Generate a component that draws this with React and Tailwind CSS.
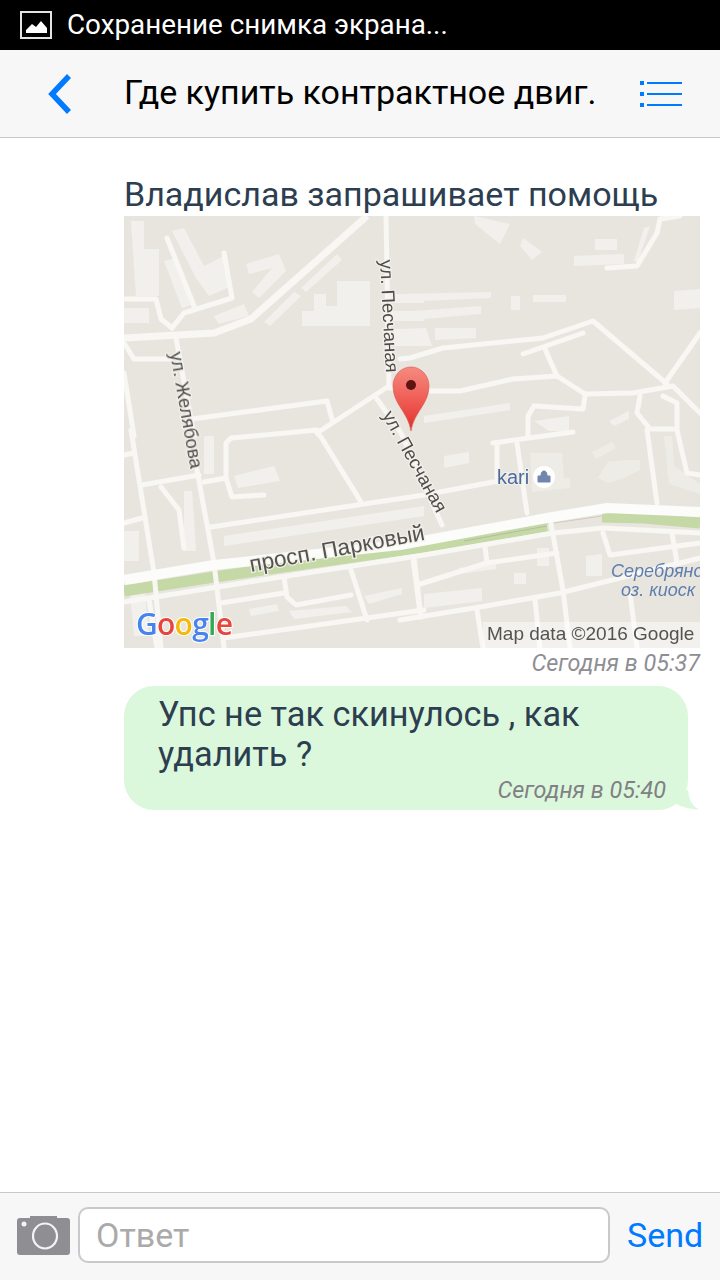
import React from 'react';

// ── map data (coords are px inside the 576x432 map) ─────────────────────────

const roads = [
  '262,0 265,170',
  '265,170 193,217 197,221 237,286',
  '253,183 277,217 318,309',
  '87,311 300,279 369,266',
  '0,386 150,362 300,339 429,317 479,312 576,317',
  '483,52 513,50 533,17 536,3 556,0',
  '276,143 286,142 319,132 419,122 469,105 543,168',
  '576,117 541,167',
  '399,138 459,117',
  '421,133 433,160',
  '266,172 306,175 336,175 389,163 433,160 461,178',
  '461,178 509,177 549,170 576,197',
  '461,180 459,193 410,190 404,200 404,220',
  '516,180 513,197 526,213 553,213 553,187 539,180',
  '369,227 449,216',
  '373,227 373,266',
  '393,227 403,297',
  '523,214 533,287',
  '553,214 563,257 576,259',
  '426,302 439,374 446,432',
  '479,317 486,339 576,327',
  '548,317 553,347',
  '276,404 356,391 436,377 576,342',
  '289,342 296,397',
  '361,331 363,347 293,369',
  '363,347 433,337',
  '411,384 416,432',
  '353,394 359,432',
  '506,377 513,432',
  '7,214 30,357 37,432',
  '18,269 75,259',
  '73,254 90,347 100,432',
  '80,266 102,262',
  '102,262 102,227 107,222 193,214',
  '102,262 108,281 140,279',
  '37,271 55,294 60,332',
  '0,307 18,302',
  '0,239 10,237',
  '97,387 160,377',
  '160,361 163,381 172,389 227,379',
  '227,354 243,404',
  '290,341 297,401',
  '100,422 300,394',
  '25,384 33,432',
  '0,83 32,83 37,103 48,112',
  '48,112 60,97 108,82 100,37',
  '43,22 70,90',
  '0,127 10,143 47,143',
  '52,122 70,220',
  '0,157 10,220',
  '68,203 203,185 208,203',
];

const blocks = [
  '7,5 20,5 20,33 35,33 35,80 12,80',
  '40,45 52,42 70,88 58,92',
  '48,15 60,12 80,50 100,40 108,70 85,80 72,62',
  '122,48 155,38 162,55 135,82 128,76 148,52 125,58',
  '140,106 170,76 177,80 146,110',
  '177,72 213,38 218,44 182,76',
  '178,110 178,95 190,95 190,78 202,78 202,90 213,90 213,65 246,65 246,110',
  '262,78 300,78 300,87 262,87',
  '262,95 300,95 300,105 262,105',
  '265,113 300,113 300,130 265,130',
  '0,92 25,92 25,107 0,107',
  '90,100 120,88 125,100 95,108',
  '276,78 367,76 367,82 276,86',
  '276,96 357,90 357,98 276,105',
  '276,113 302,112 308,130 276,130',
  '311,112 352,112 352,122 311,124',
  '387,80 396,80 396,94 387,94',
  '409,79 442,79 442,86 409,86',
  '550,75 576,73 576,92 550,94',
  '450,40 500,38 500,48 450,50',
  '471,23 493,23 493,34 471,34',
  '399,22 418,36 408,44 396,30',
  '350,0 386,8 376,28 351,8',
  '510,45 520,12 526,10 514,46',
  '300,200 386,187 386,194 300,207',
  '410,205 445,200 445,215 425,215',
  '485,205 505,195 505,203 490,210',
  '100,320 300,290 300,300 100,330',
  '110,260 150,250 156,265 114,272',
  '60,275 68,275 72,335 60,335',
  '0,315 15,315 15,345 0,345',
  '80,220 90,220 90,258 80,258',
  '165,395 222,390 228,396 170,403',
  '125,393 153,388 155,395 127,400',
  '240,380 278,372 278,378 245,388',
  '320,240 345,236 345,247 320,252',
  '335,352 372,347 372,353 335,358',
  '390,357 402,357 402,368 390,368',
  '358,372 358,385 300,392 300,378',
  '413,332 425,332 425,350 413,350',
  '462,340 478,338 478,360 462,360',
  '5,365 10,420 25,420 20,365',
];

// fainter shapes behind the shop label
const faintBlocks = [
  '406,237 438,237 440,262 446,262 446,272 408,276',
  '474,262 484,246 500,244 516,244 516,254 500,262 484,267',
  '468,236 488,226 492,232 472,243',
  '540,220 548,220 550,250 576,268 576,278 545,268',
];

const labels = [
  { text: 'ул. Песчаная', x: 256, y: 44, rot: 87 },
  { text: 'ул. Желябова', x: 46, y: 137, rot: 80 },
  { text: 'ул. Песчаная', x: 258, y: 199, rot: 61 },
];

// ── icons ───────────────────────────────────────────────────────────────────

const PictureIcon = () => (
  <svg width="34" height="30" viewBox="0 0 34 30" className="shrink-0">
    <rect x="2" y="2" width="30" height="26" fill="none" stroke="#e4e4e4" strokeWidth="2" />
    <path d="M7 23 L7 20 L13 14 L17 17 L22 11 L28 18 L28 23 Z" fill="#fff" />
  </svg>
);

const BackIcon = () => (
  <svg width="26" height="42" viewBox="0 0 26 42">
    <path d="M22 3 L5 21 L22 39" fill="none" stroke="#007aff" strokeWidth="5.5" />
  </svg>
);

const ListIcon = () => (
  <svg width="42" height="28" viewBox="0 0 42 28">
    <g fill="#007aff">
      <rect x="0" y="1" width="4" height="4" />
      <rect x="0" y="12" width="4" height="4" />
      <rect x="0" y="23" width="4" height="4" />
      <rect x="7" y="2" width="35" height="2" />
      <rect x="7" y="13" width="35" height="2" />
      <rect x="7" y="24" width="35" height="2" />
    </g>
  </svg>
);

const CameraIcon = () => (
  <svg width="53" height="40" viewBox="0 0 53 40" className="shrink-0">
    <path
      d="M13 3 L13 1 L40 1 L40 3 L50 3 Q53 3 53 6 L53 37 Q53 40 50 40 L3 40 Q0 40 0 37 L0 6 Q0 3 3 3 Z"
      fill="#8e8e93"
    />
    <ellipse cx="28" cy="21" rx="12" ry="12.5" fill="none" stroke="#f4f4f4" strokeWidth="2.2" />
    <circle cx="7" cy="9" r="2.5" fill="#f4f4f4" />
  </svg>
);

// ── map ─────────────────────────────────────────────────────────────────────

const MapPicture = () => (
  <svg viewBox="0 0 576 432" width="576" height="432" className="block">
    <defs>
      <filter id="soft" x="-5%" y="-5%" width="110%" height="110%">
        <feGaussianBlur stdDeviation="0.7" />
      </filter>
      <filter id="softText" x="-10%" y="-30%" width="120%" height="160%">
        <feGaussianBlur stdDeviation="0.4" />
      </filter>
      <linearGradient id="pin" x1="0" y1="0" x2="0" y2="1">
        <stop offset="0" stopColor="#f68a80" />
        <stop offset="0.55" stopColor="#ee5a52" />
        <stop offset="1" stopColor="#e02f28" />
      </linearGradient>
      <clipPath id="mapClip">
        <rect width="576" height="432" />
      </clipPath>
    </defs>
    <g clipPath="url(#mapClip)">
      <rect width="576" height="432" fill="#e8e5df" />
      <g filter="url(#soft)">
        {blocks.map((b, i) => (
          <polygon key={i} points={b} fill="#f1f0ec" />
        ))}
        {faintBlocks.map((b, i) => (
          <polygon key={i} points={b} fill="#eeece7" />
        ))}
        {/* green strip of the avenue */}
        <polyline points="0,375 90,361 300,331 423,310" fill="none" stroke="#c5d9a6" strokeWidth="11" />
        <polyline points="478,301 520,302 576,307" fill="none" stroke="#c5d9a6" strokeWidth="11" />
        <polyline points="340,325 423,310" fill="none" stroke="#b3bca0" strokeWidth="1" />
        <polyline points="423,308 478,300" fill="none" stroke="#cfcabd" strokeWidth="1" />
        {roads.map((r, i) => (
          <polyline
            key={i}
            points={r}
            fill="none"
            stroke="#f8f7f4"
            strokeWidth="5"
            strokeLinejoin="round"
            strokeLinecap="round"
          />
        ))}
        <polyline
          points="0,122 90,117 127,103 243,0"
          fill="none"
          stroke="#f8f7f4"
          strokeWidth="7"
          strokeLinejoin="round"
        />
        <polyline
          points="0,364 90,349 276,329 423,302 483,292 576,296"
          fill="none"
          stroke="#fcfcfa"
          strokeWidth="10"
          strokeLinejoin="round"
        />
      </g>

      <g filter="url(#softText)" fontFamily="'Liberation Sans', sans-serif">
        {labels.map((l, i) => (
          <text
            key={i}
            transform={`translate(${l.x} ${l.y}) rotate(${l.rot})`}
            fontSize="18.5"
            fill="#4f4c47"
            stroke="#f1f0ec"
            strokeWidth="2.5"
            paintOrder="stroke"
          >
            {l.text}
          </text>
        ))}
        <text
          transform="translate(127 356) rotate(-10.5)"
          fontSize="22.5"
          fill="#55524c"
          stroke="#f1f0ec"
          strokeWidth="2.5"
          paintOrder="stroke"
        >
          просп. Парковый
        </text>
        <text x="373" y="268" fontSize="20" fill="#4d6a9c" stroke="#f1f0ec" strokeWidth="2" paintOrder="stroke">
          kari
        </text>
        <circle cx="420" cy="261" r="11" fill="#fff" />
        <path d="M414 266 L414 260 L426 260 L426 266 Z M417 260 Q417 255 420 255 Q423 255 423 260" fill="#7285ad" stroke="#7285ad" strokeWidth="1" />
        <text x="487" y="361" fontSize="18" fontStyle="italic" fill="#5f7ead">Серебряно</text>
        <text x="497" y="380" fontSize="18" fontStyle="italic" fill="#5f7ead">оз. киоск</text>
        <rect x="359" y="406" width="217" height="26" fill="#fff" fillOpacity="0.45" />
        <text x="363" y="424" fontSize="19" fill="#55534f">Map data ©2016 Google</text>
        <text
          x="12"
          y="419"
          fontSize="30"
          fontWeight="600"
          fontFamily="'Open Sans', sans-serif"
          textLength="97"
          stroke="#fff"
          strokeWidth="2"
          paintOrder="stroke"
        >
          <tspan fill="#4a84ee">G</tspan>
          <tspan fill="#e8453c">o</tspan>
          <tspan fill="#f5b80e">o</tspan>
          <tspan fill="#4a84ee">g</tspan>
          <tspan fill="#35a853">l</tspan>
          <tspan fill="#e8453c">e</tspan>
        </text>
      </g>

      {/* marker */}
      <path
        d="M287 215 C284 196 269 188 269 170 A18 19 0 0 1 305 170 C305 188 290 196 287 215 Z"
        fill="url(#pin)"
        stroke="#d9564e"
        strokeWidth="0.6"
      />
      <circle cx="287" cy="169" r="5" fill="#5e1512" />
    </g>
  </svg>
);

// ── page ────────────────────────────────────────────────────────────────────

const App = () => (
  <div className="flex h-[1280px] w-[720px] flex-col overflow-hidden bg-white font-['Roboto',sans-serif]">
    {/* status bar */}
    <div className="flex h-[50px] shrink-0 items-center gap-[14px] bg-black pl-[19px] text-[27.8px] text-white">
      <PictureIcon />
      <span>Сохранение снимка экрана...</span>
    </div>

    {/* header */}
    <div className="flex h-[88px] shrink-0 items-center border-b border-[#c8c8c8] bg-[#f7f7f7] pl-[47px] pr-[38px]">
      <BackIcon />
      <h1 className="ml-[51px] mb-[2px] flex-1 text-[34px] font-normal whitespace-nowrap text-black">
        Где купить контрактное двиг.
      </h1>
      <ListIcon />
    </div>

    {/* messages */}
    <div className="flex-1 pl-[124px] pr-[20px] pt-[35px]">
      <p className="h-[43px] text-[34px] leading-[42px] whitespace-nowrap text-[#2c3e50]">
        Владислав запрашивает помощь
      </p>
      <MapPicture />
      <p className="mt-[1px] text-right text-[23.4px] leading-[28px] text-[#8e8e93] italic">Сегодня в 05:37</p>

      <div className="relative mt-[9px] h-[124px] w-[564px] rounded-[30px] bg-[#dcf8dc] pl-[34px] pr-[22px] pt-[8px]">
        <p className="text-[34.3px] leading-[40px] text-[#2c3e50]">Упс не так скинулось , как удалить ?</p>
        <p className="mt-[2px] text-right text-[23.4px] leading-[28px] text-[#808085] italic">Сегодня в 05:40</p>
        <svg
          width="28"
          height="20"
          viewBox="0 0 28 20"
          className="absolute right-[-12px] bottom-0"
        >
          <path d="M16 0 Q17 15 27 19.5 Q16 20 2 13 L0 0 Z" fill="#dcf8dc" />
        </svg>
      </div>
    </div>

    {/* reply bar */}
    <div className="flex h-[88px] shrink-0 items-center border-t border-[#c8c8c8] bg-[#f7f7f7] pb-[3px] pl-[17px]">
      <CameraIcon />
      <div className="ml-[8px] flex h-[56px] w-[532px] items-center rounded-[10px] border-2 border-[#c8c8cd] bg-white pl-[16px] text-[34px] text-[#aaaaaa]">
        Ответ
      </div>
      <span className="ml-[17px] text-[34px] text-[#007aff]">Send</span>
    </div>
  </div>
);

export default App;
